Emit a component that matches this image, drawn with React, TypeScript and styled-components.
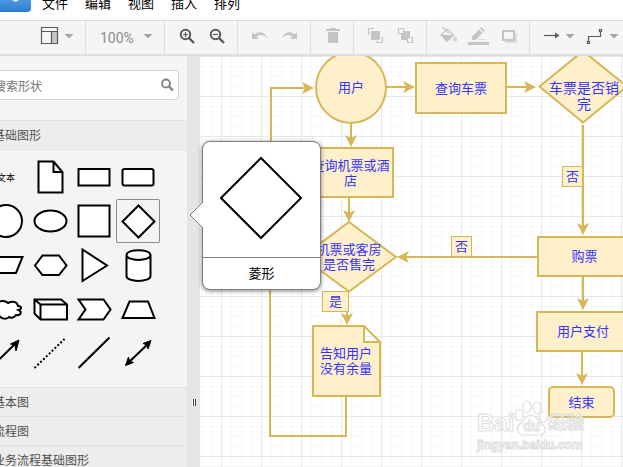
import React from "react";
import styled, { createGlobalStyle, css } from "styled-components";

const GlobalStyle = createGlobalStyle`
  *, *::before, *::after { box-sizing: border-box; }
  body {
    margin: 0;
    overflow: hidden;
    font-family: "Liberation Sans", "Noto Sans CJK SC", sans-serif;
    background: #fff;
    color: #000;
  }
  button { font: inherit; color: inherit; background: none; border: 0; padding: 0; cursor: pointer; }
  svg { display: block; }
`;

const ACCENT = "#d6b656";
const NODE_FILL = "#fff0cc";

const Page = styled.div`
  display: flex;
  flex-direction: column;
  height: 100vh;
`;

/* ---------- menu bar ---------- */

const MenuBar = styled.nav`
  display: flex;
  align-items: flex-start;
  gap: 11px;
  height: 20px;
  overflow: hidden;
`;

const Logo = styled.a`
  display: flex;
  justify-content: center;
  width: 31px;
  height: 12px;
  border-radius: 0 0 4px 0;
  border-bottom: 1px solid #2a74c2;
  background: linear-gradient(#4a98e2, #2f80d2);
`;

const MenuItems = styled.div`
  display: flex;
  gap: 17px;
  margin-top: -6px;
`;

const MenuItem = styled.button`
  font-size: 13px;
  line-height: 20px;
  white-space: nowrap;
`;

/* ---------- toolbar ---------- */

const Toolbar = styled.div`
  display: flex;
  flex: none;
  height: 36px;
  border-top: 1px solid #dadada;
  border-bottom: 2px solid #dedede;
  background: #f5f5f5;
  box-shadow: inset 0 1px 0 #fafafa;
  overflow: hidden;
`;

const ToolGroup = styled.div<{ $first?: boolean }>`
  display: flex;
  flex: none;
  align-items: center;
  padding: 0 6px 0 ${(p) => (p.$first ? 35 : 6)}px;
  border-right: 1px solid #dedede;
`;

const ToolButton = styled.button<{ $off?: boolean }>`
  display: flex;
  align-items: center;
  height: 32px;
  color: ${(p) => (p.$off ? "#c4c4c4" : "#5a5a5a")};
`;

const ZoomLevel = styled.span`
  width: 52px;
  padding-left: 8px;
  text-align: left;
  font-family: Roboto, sans-serif;
  font-size: 14px;
  color: #8a8a8a;
`;

const CaretIcon = () => (
  <svg width="14" height="32" viewBox="0 0 14 32">
    <path d="M-.5 12H8.500L4 16.500z" fill="#a6a6a6" />
  </svg>
);

function ToolIcon({ children }: { children: React.ReactNode }) {
  return (
    <svg width="30" height="32" viewBox="0 0 30 32" fill="none" stroke="currentColor" strokeWidth="2">
      {children}
    </svg>
  );
}

/* ---------- sidebar ---------- */

const Workspace = styled.div`
  position: relative;
  display: flex;
  flex: 1;
  min-height: 0;
`;

const Sidebar = styled.aside`
  flex: none;
  width: 187px;
  overflow: hidden;
  background: #f4f4f4;
`;

const SearchForm = styled.form`
  display: flex;
  align-items: center;
  height: 30px;
  margin: 14px 8px 20px -16px;
  padding: 0 4px 0 9px;
  border: 1px solid #d2d2d2;
  border-radius: 4px;
  background: #fff;
`;

const SearchInput = styled.input`
  flex: 1;
  min-width: 0;
  padding: 0;
  border: 0;
  outline: 0;
  background: none;
  font-family: "Noto Sans CJK SC", sans-serif;
  font-size: 12px;
  &::placeholder { color: #757575; opacity: 1; }
`;

const SectionTitle = styled.button<{ $open?: boolean }>`
  display: block;
  width: 100%;
  height: 29px;
  padding-top: 1px;
  border-top: 1px solid #e2e2e2;
  background: #ededed;
  font-size: 12px;
  line-height: 28px;
  text-align: left;
  text-indent: -7px;
  white-space: nowrap;
  color: #505050;
  ${(p) =>
    p.$open &&
    css`
      height: 30px;
      border-bottom: 1px solid #e2e2e2;
    `}
`;

const Palette = styled.div`
  display: grid;
  grid-template-columns: repeat(4, 44px);
  grid-auto-rows: 44px;
  margin-left: -16px;
  padding: 5px 0 12px;
`;

const PaletteItem = styled.button<{ $active?: boolean }>`
  display: grid;
  place-items: center;
  border-radius: 2px;
  font-size: 9px;
  box-shadow: ${(p) => (p.$active ? "inset 0 0 0 1px #8c8c8c" : "none")};
`;

const Splitter = styled.div`
  display: flex;
  flex: none;
  justify-content: center;
  align-items: flex-start;
  width: 13px;
  padding-top: 343px;
  background: #e5e5e5;
`;

const Grip = styled.span`
  width: 2px;
  height: 7px;
  border: solid #444;
  border-width: 0 1px 0 0;
  background: #fff;
`;

/* ---------- diagram ---------- */

const Canvas = styled.main`
  position: relative;
  flex: 1;
  overflow: hidden;
  background:
    linear-gradient(90deg, #e8e8e8 1px, transparent 1px) 21px 0 / 40px 40px,
    linear-gradient(#e8e8e8 1px, transparent 1px) 21px 0 / 40px 40px,
    linear-gradient(90deg, #f8f8f8 1px, transparent 1px) 1px 0 / 10px 10px,
    linear-gradient(#f8f8f8 1px, #fff 1px) 1px 0 / 10px 10px;
`;

const EdgeLayer = styled.svg`
  position: absolute;
  inset: 0;
  width: 100%;
  height: 100%;
`;

type Kind = "rect" | "circle" | "round" | "plain" | "tag";

const outline: Record<Kind, ReturnType<typeof css>> = {
  rect: css`border: 2px solid ${ACCENT}; background: ${NODE_FILL};`,
  circle: css`border: 2px solid ${ACCENT}; background: ${NODE_FILL}; border-radius: 50%;`,
  round: css`border: 2px solid ${ACCENT}; background: ${NODE_FILL}; border-radius: 5px;`,
  plain: css`background: none;`,
  tag: css`border: 1px solid ${ACCENT}; background: ${NODE_FILL};`,
};

interface Box {
  kind: Kind;
  x: number;
  y: number;
  w: number;
  h: number;
  lines: string[];
  large?: boolean;
}

const Node = styled.div<{ $b: Box }>`
  position: absolute;
  left: ${(p) => p.$b.x}px;
  top: ${(p) => p.$b.y}px;
  width: ${(p) => p.$b.w}px;
  height: ${(p) => p.$b.h}px;
  display: flex;
  flex-direction: column;
  align-items: center;
  justify-content: center;
  font-size: ${(p) => (p.$b.large ? 14 : 13)}px;
  line-height: ${(p) => (p.$b.large ? 16 : 15)}px;
  white-space: nowrap;
  color: #3333ff;
  ${(p) => outline[p.$b.kind]}
`;

const nodes: Box[] = [
  { kind: "circle", x: 115, y: -5, w: 72, h: 73, lines: ["用户"] },
  { kind: "rect", x: 215, y: 6, w: 92, h: 52, lines: ["查询车票"] },
  { kind: "plain", x: 339, y: 4, w: 90, h: 72, lines: ["车票是否销", "完"], large: true },
  { kind: "rect", x: 107, y: 91, w: 87, h: 51, lines: ["查询机票或酒", "店"] },
  { kind: "plain", x: 102, y: 166, w: 94, h: 70, lines: ["机票或客房", "是否售完"] },
  { kind: "tag", x: 122, y: 235, w: 27, h: 21, lines: ["是"] },
  { kind: "plain", x: 112, y: 269, w: 68, h: 72, lines: ["告知用户", "没有余量"] },
  { kind: "tag", x: 362, y: 110, w: 21, h: 21, lines: ["否"] },
  { kind: "tag", x: 251, y: 180, w: 21, h: 21, lines: ["否"] },
  { kind: "rect", x: 337, y: 180, w: 95, h: 41, lines: ["购票"] },
  { kind: "rect", x: 336, y: 255, w: 94, h: 41, lines: ["用户支付"] },
  { kind: "round", x: 348, y: 330, w: 67, h: 32, lines: ["结束"] },
];

const edges = [
  "M146 341V380H70V232M71 90V32H106",
  "M187 31H206",
  "M307 31H328",
  "M151 67V82",
  "M149 142V157",
  "M147 256V261",
  "M383 69V170",
  "M337 201H206",
  "M383 221V246",
  "M382 296V321",
];

const heads: [number, number, number][] = [
  [114, 32, 0],
  [215, 31, 0],
  [336, 31, 0],
  [151, 91, 90],
  [149, 166, 90],
  [147, 269, 90],
  [383, 179, 90],
  [197, 201, 180],
  [383, 254, 90],
  [382, 329, 90],
];

/* ---------- watermark ---------- */

const Watermark = styled.div`
  position: absolute;
  left: 277px;
  top: 344px;
  opacity: 0.75;
  color: #fff;
  font-weight: 700;
  -webkit-text-stroke: 1px #d4d4d4;
`;

const WatermarkBrand = styled.div`
  display: flex;
  align-items: flex-end;
  height: 36px;
  font-size: 24px;
  line-height: 26px;
`;

const WatermarkCn = styled.span`
  font-size: 18px;
`;

const WatermarkUrl = styled.div`
  font-size: 12px;
  line-height: 18px;
`;

/* ---------- shape preview ---------- */

const Preview = styled.div`
  position: absolute;
  left: 202px;
  top: 85px;
  width: 119px;
  border: 1px solid #808080;
  border-radius: 8px;
  background: #fff;
  box-shadow: 0 1px 4px rgba(0, 0, 0, 0.5);
`;

const PreviewPointer = styled.svg`
  position: absolute;
  left: -14px;
  top: 60px;
`;

const PreviewShape = styled.div`
  display: flex;
  justify-content: center;
  padding: 14px 0 17px;
  border-bottom: 1px solid #808080;
`;

const PreviewTitle = styled.div`
  font-size: 13px;
  line-height: 31px;
  text-align: center;
`;

/* ---------- content ---------- */

const menu = ["文件", "编辑", "视图", "插入", "排列"];

const shapes: { name: string; art: React.ReactNode; active?: boolean }[] = [
  { name: "文本", art: null },
  { name: "文档", art: <path d="M10.500 6.500H25.500L34.500 17V37.500H10.500zM25.500 6.500V17H34.500" /> },
  { name: "矩形", art: <path d="M6.500 14H37.500V30.500H6.500z" /> },
  { name: "圆角矩形", art: <rect x="6.500" y="14" width="31" height="16.500" rx="2" /> },
  { name: "圆形", art: <circle cx="22" cy="22" r="16" /> },
  { name: "椭圆", art: <ellipse cx="22.500" cy="22" rx="16" ry="10.500" /> },
  { name: "正方形", art: <path d="M6.500 6.500H37.500V37.500H6.500z" /> },
  { name: "菱形", art: <path d="M22.500 6.500L38.500 22.500L22.500 38.500L6.500 22.500z" />, active: true },
  { name: "平行四边形", art: <path d="M12.500 14H38.500L32 30H6z" /> },
  { name: "六边形", art: <path d="M14.500 12.500H31L38.500 22.500L31 32H14.500L7 22.500z" /> },
  { name: "三角形", art: <path d="M10.500 6.500L35 22.500L10.500 38z" /> },
  {
    name: "圆柱",
    art: <path d="M10.500 12C10.500 5.500 34.500 5.500 34.500 12V33C34.500 39.500 10.500 39.500 10.500 33zM10.500 12C10.500 18.500 34.500 18.500 34.500 12" />,
  },
  {
    name: "云",
    art: (
      <path d="M13 18C14 13 21 13 24 16C28 14 33 14 34 19C38 19 38 22 34.500 23C39 25 36 29 32 28C30 31 27 31 25 30C23 32.500 18 32 16 29.500C10 30 6 27 9 23.500C5 20 9 17 13 18z" />
    ),
  },
  {
    name: "立方体",
    art: <path d="M6.500 12.500H33L39 17.500V32.500H12.500L6.500 26.500zM6.500 12.500L12.500 17.500H39M12.500 17.500V32.500" />,
  },
  { name: "步骤", art: <path d="M6.500 12.500H31.500L38.500 22.500L31.500 32.500H6.500L13.500 22.500z" /> },
  { name: "梯形", art: <path d="M13.500 14.500H32L38.500 31H6.500z" /> },
  {
    name: "箭头",
    art: (
      <>
        <path d="M6 37.500L32 12" />
        <path d="M35 9L26.500 13L31 14L32 20z" fill="#000" strokeWidth="1" />
      </>
    ),
  },
  { name: "虚线", art: <path d="M6.500 37L36.500 8" strokeDasharray="2 2" /> },
  { name: "直线", art: <path d="M6.500 37L37.500 6.500" /> },
  {
    name: "双向箭头",
    art: (
      <>
        <path d="M12 32L33 12" />
        <path d="M35 9.500L27 12.500L31 14L32 18zM9.500 34.500L17.500 31.500L13.500 30L12.500 26z" fill="#000" strokeWidth="1" />
      </>
    ),
  },
];

export default function App() {
  return (
    <Page>
      <GlobalStyle />
      <MenuBar>
        <Logo href="#" aria-label="主页">
          <svg width="8" height="3" viewBox="0 0 8 3">
            <path d="M0 0H7L5 1.500H2z" fill="#dceafa" />
          </svg>
        </Logo>
        <MenuItems>
          {menu.map((m) => (
            <MenuItem key={m}>{m}</MenuItem>
          ))}
        </MenuItems>
      </MenuBar>

      <Toolbar role="toolbar">
        <ToolGroup $first>
          <ToolButton aria-label="视图">
            <ToolIcon>
              <path d="M17 9.500H22V21H17z" fill="#c8c8c8" stroke="none" />
              <path d="M6.500 5.500H22.500V21.500H6.500zM6 9.500H23M16.500 9.500V21" strokeWidth="1.200" />
            </ToolIcon>
            <CaretIcon />
          </ToolButton>
        </ToolGroup>
        <ToolGroup>
          <ToolButton aria-label="缩放 100%">
            <ZoomLevel>100%</ZoomLevel>
            <CaretIcon />
          </ToolButton>
        </ToolGroup>
        <ToolGroup>
          <ToolButton aria-label="放大">
            <ToolIcon>
              <circle cx="14.500" cy="12.500" r="4.700" />
              <path d="M18 16L23 21" strokeWidth="2.400" />
              <path d="M12 12.500H17M14.500 10V15" strokeWidth="1.200" />
            </ToolIcon>
          </ToolButton>
          <ToolButton aria-label="缩小">
            <ToolIcon>
              <circle cx="14.500" cy="12.500" r="4.700" />
              <path d="M18 16L23 21" strokeWidth="2.400" />
              <path d="M12 12.500H17" strokeWidth="1.200" />
            </ToolIcon>
          </ToolButton>
        </ToolGroup>
        <ToolGroup>
          <ToolButton $off aria-label="撤销">
            <ToolIcon>
              <path d="M8 10V17H15L12.500 14.500C16 12 20 12.500 23 16C21 9.500 14.500 8.500 10.500 12.500z" fill="currentColor" stroke="none" />
            </ToolIcon>
          </ToolButton>
          <ToolButton $off aria-label="重做">
            <ToolIcon>
              <path d="M23 10V17H16L18.500 14.500C15 12 11 12.500 8 16C10 9.500 16.500 8.500 20.500 12.500z" fill="currentColor" stroke="none" />
            </ToolIcon>
          </ToolButton>
        </ToolGroup>
        <ToolGroup>
          <ToolButton $off aria-label="删除">
            <ToolIcon>
              <path d="M9 7H13V6H19V7H23V9H9zM11 10H21V21H11z" fill="currentColor" stroke="none" />
            </ToolIcon>
          </ToolButton>
        </ToolGroup>
        <ToolGroup>
          <ToolButton $off aria-label="移至最前">
            <ToolIcon>
              <path d="M11 9H20V18H11z" fill="currentColor" stroke="none" />
              <path d="M14 6.500H8.500V12H10M21 15.500H22.500V20.500H17V19" strokeWidth="1.200" />
            </ToolIcon>
          </ToolButton>
          <ToolButton $off aria-label="移至最后">
            <ToolIcon>
              <path d="M14 9H20V15H17V18H11V12H14z" fill="currentColor" stroke="none" />
              <path d="M8.500 6.500H13.500V11.500H8.500zM17.500 15.500H22.500V20.500H17.500z" strokeWidth="1.200" />
            </ToolIcon>
          </ToolButton>
        </ToolGroup>
        <ToolGroup>
          <ToolButton $off aria-label="填充颜色">
            <ToolIcon>
              <path d="M8 13L14 7L20.500 13L14 19.500z" fill="none" strokeWidth="1.200" />
              <path d="M8 13H20.500L14 19.500z" fill="currentColor" stroke="none" />
              <path d="M9.500 5L15.500 11" strokeWidth="1.200" />
              <path d="M22 14C26 18 24 19.500 22 19.500S18.500 18 22 14z" fill="#d6d6d6" stroke="none" />
            </ToolIcon>
          </ToolButton>
          <ToolButton $off aria-label="线条颜色">
            <ToolIcon>
              <path d="M9 18V14.500L16 7.500L19.500 11L12.500 18zM17 6.500L18.500 5L22 8.500L20.500 10z" fill="currentColor" stroke="none" />
              <path d="M15 17.500H23" stroke="#dadada" strokeWidth="1" />
              <path d="M5 21.500H26" strokeWidth="3" />
            </ToolIcon>
          </ToolButton>
          <ToolButton $off aria-label="阴影">
            <ToolIcon>
              <path d="M12 11H24V21H12z" fill="#dcdcdc" stroke="none" />
              <path d="M10 9H21V18H10z" fill="#f5f5f5" />
            </ToolIcon>
          </ToolButton>
        </ToolGroup>
        <ToolGroup>
          <ToolButton aria-label="连线">
            <ToolIcon>
              <path d="M8 13.500H20" strokeWidth="1.200" />
              <path d="M19 10.500L23.500 13.500L19 16.500z" fill="currentColor" stroke="none" />
            </ToolIcon>
            <CaretIcon />
          </ToolButton>
          <ToolButton aria-label="航点">
            <ToolIcon>
              <path d="M8.500 19V14.500H20.500V10" strokeWidth="1.200" />
              <path d="M7.500 19.500H9.500V21.500H7.500zM19.500 7.500H21.500V9.500H19.500z" strokeWidth="1.200" />
            </ToolIcon>
            <CaretIcon />
          </ToolButton>
        </ToolGroup>
      </Toolbar>

      <Workspace>
        <Sidebar>
          <SearchForm onSubmit={(e) => e.preventDefault()}>
            <SearchInput aria-label="搜索形状" placeholder="搜索形状" />
            <button aria-label="搜索">
              <svg width="13" height="14" viewBox="0 0 13 14" fill="none" stroke="#808080">
                <circle cx="5" cy="5.500" r="4" strokeWidth="1.800" />
                <path d="M8 8.500L12 12.500" strokeWidth="2.400" />
              </svg>
            </button>
          </SearchForm>
          <SectionTitle $open>基础图形</SectionTitle>
          <Palette>
            {shapes.map((s) => (
              <PaletteItem key={s.name} aria-label={s.name} $active={s.active}>
                {s.art ? (
                  <svg width="44" height="44" viewBox="0 0 44 44" fill="#fff" stroke="#000" strokeWidth="2">
                    {s.art}
                  </svg>
                ) : (
                  s.name
                )}
              </PaletteItem>
            ))}
          </Palette>
          <SectionTitle>基本图</SectionTitle>
          <SectionTitle>流程图</SectionTitle>
          <SectionTitle>业务流程基础图形</SectionTitle>
        </Sidebar>

        <Splitter role="separator">
          <Grip />
          <Grip />
        </Splitter>

        <Canvas>
          <EdgeLayer stroke={ACCENT} strokeWidth="2" fill="none">
            {edges.map((d) => (
              <path key={d} d={d} />
            ))}
            <g fill={NODE_FILL}>
              <path d="M383 -5L427 30.500L383 66.500L339.500 30.500z" />
              <path d="M149 166L196 201L149 235.500L102 201z" />
              <path d="M113 270H164L180 286V340H113zM164 270V286H180" />
            </g>
          </EdgeLayer>
          {nodes.map((b, i) => (
            <Node key={i} $b={b}>
              {b.lines.map((l) => (
                <span key={l}>{l}</span>
              ))}
            </Node>
          ))}
          <EdgeLayer fill={ACCENT}>
            {heads.map(([x, y, a], i) => (
              <path key={i} d="M0 0L-12 -6L-9 0L-12 6z" transform={`translate(${x} ${y}) rotate(${a})`} />
            ))}
          </EdgeLayer>
          <Watermark>
            <WatermarkBrand>
              <span>Bai</span>
              <svg width="34" height="36" viewBox="0 0 34 36" fill="#fff" stroke="#d4d4d4" strokeWidth="1.200">
                <ellipse cx="5" cy="15" rx="4" ry="5.500" />
                <ellipse cx="13" cy="7" rx="4" ry="6" />
                <ellipse cx="23" cy="8" rx="4" ry="6" />
                <ellipse cx="29.500" cy="17" rx="4" ry="5.500" />
                <path d="M17 15C11 15 11 20 6 24C1 29 4 35 10 35H25C32 35 33 28 28 24C23 20 23 15 17 15z" />
                <text x="17.500" y="31" textAnchor="middle" fontSize="14" strokeWidth="1">
                  du
                </text>
              </svg>
              <WatermarkCn>经验</WatermarkCn>
            </WatermarkBrand>
            <WatermarkUrl>jingyan.baidu.com</WatermarkUrl>
          </Watermark>
        </Canvas>

        <Preview role="tooltip">
          <PreviewPointer width="15" height="27" viewBox="0 0 15 27">
            <path d="M14 0L1 13L14 26" fill="#fff" stroke="#808080" />
          </PreviewPointer>
          <PreviewShape>
            <svg width="84" height="84" viewBox="0 0 84 84" fill="none" stroke="#000" strokeWidth="2">
              <path d="M41 2L81 42L41 82L1 42z" />
            </svg>
          </PreviewShape>
          <PreviewTitle>菱形</PreviewTitle>
        </Preview>
      </Workspace>
    </Page>
  );
}
